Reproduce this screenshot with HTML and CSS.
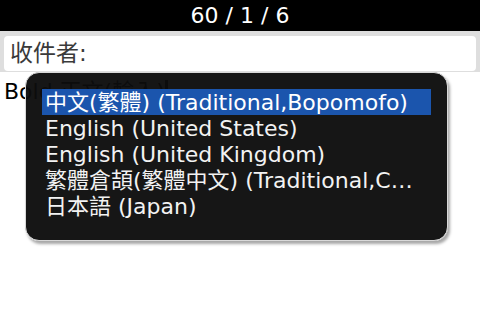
FILE: index.html
```html
<!DOCTYPE html>
<html lang="en">
<head>
    <meta charset="UTF-8">
    <title>Compose</title>
    <link rel="stylesheet" href="styles.css">
</head>
<body>
    <div class="title-bar">60 / 1 / 6</div>

    <div class="header">
        <div class="field">收件者:</div>
    </div>

    <div class="editor">Bold 正文(輸入)<span class="caret"></span></div>

    <!-- input method picker -->
    <div class="popup">
        <ul class="menu">
            <li class="selected">中文(繁體) (Traditional,Bopomofo)</li>
            <li>English (United States)</li>
            <li>English (United Kingdom)</li>
            <li>繁體倉頡(繁體中文) (Traditional,Cangjie)</li>
            <li>日本語 (Japan)</li>
        </ul>
    </div>
</body>
</html>
```

FILE: styles.css
```css
* {
    margin: 0;
    padding: 0;
    box-sizing: border-box;
}

body {
    width: 480px;
    height: 320px;
    overflow: hidden;
    background: white;
    font-family: 'DejaVu Sans', 'Noto Sans CJK TC', sans-serif;
    font-size: 22px;
    position: relative;
}

.title-bar {
    height: 31px;
    background: #000;
    color: white;
    text-align: center;
    line-height: 31px;
}

.header {
    background: #dedede;
    padding: 5px 4px 1px;
}

.field {
    height: 35px;
    background: white;
    border-radius: 4px;
    color: #3a3a3a;
    font-size: 23px;
    line-height: 35px;
    padding-left: 6px;
}

.editor {
    padding: 7px 4px;
    color: #000;
    line-height: 26px;
}

.caret {
    display: inline-block;
    width: 3px;
    height: 22px;
    background: #000;
    vertical-align: -3px;
}

.popup {
    position: absolute;
    left: 25px;
    top: 72px;
    width: 423px;
    height: 169px;
    background: rgba(12, 12, 12, 0.96);
    border: 1px solid #d8d8d8;
    border-radius: 14px;
    box-shadow: 2px 3px 3px rgba(0, 0, 0, 0.35);
    padding: 16px 16px 0;
}

.menu {
    list-style: none;
}

.menu li {
    height: 26px;
    line-height: 27px;
    color: #f2f2f2;
    padding: 0 8px 0 3px;
    white-space: nowrap;
    overflow: hidden;
    text-overflow: ellipsis;
}

.menu li.selected {
    background: #1b55ad;
    color: white;
}
```
